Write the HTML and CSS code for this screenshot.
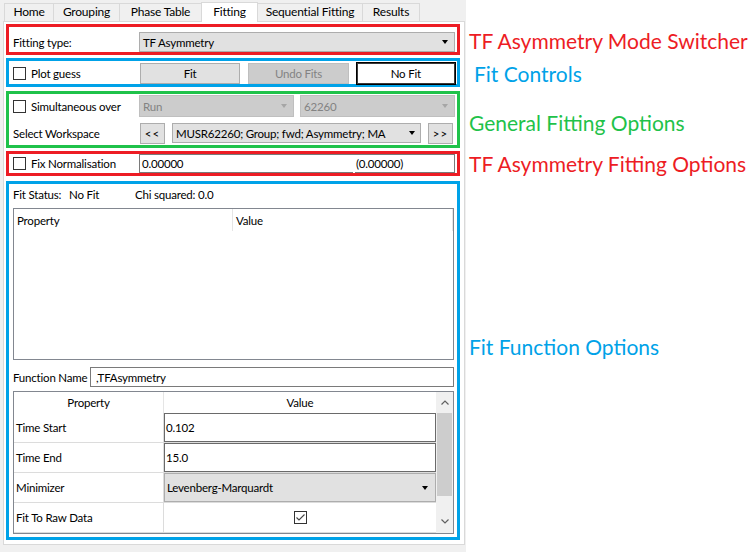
FILE: index.html
```html
<!DOCTYPE html>
<html>
<head>
<meta charset="utf-8">
<link rel="stylesheet" href="styles.css">
</head>
<body>
<div class="screen">
  <div class="app">
    <div class="tabs">
      <div class="tab w-home">Home</div>
      <div class="tab w-group">Grouping</div>
      <div class="tab w-phase">Phase Table</div>
      <div class="tab w-fit active">Fitting</div>
      <div class="tab w-seq">Sequential Fitting</div>
      <div class="tab w-res">Results</div>
    </div>
    <div class="pane">
      <section class="box red b1 row">
        <span class="lbl">Fitting type:</span>
        <div class="combo main">TF Asymmetry<i class="arrow"></i></div>
      </section>

      <section class="box blue b2 row">
        <label class="lbl chk"><span class="cb"></span>Plot guess</label>
        <div class="btns">
          <button class="btn">Fit</button>
          <button class="btn off">Undo Fits</button>
          <button class="btn dflt">No Fit</button>
        </div>
      </section>

      <section class="box green b3">
        <div class="row r1">
          <label class="lbl chk"><span class="cb"></span>Simultaneous over</label>
          <div class="pair">
            <div class="combo off">Run<i class="arrow"></i></div>
            <div class="combo off">62260<i class="arrow"></i></div>
          </div>
        </div>
        <div class="row r2">
          <span class="lbl">Select Workspace</span>
          <div class="ws">
            <button class="btn nav">&lt;&lt;</button>
            <div class="combo wsc">MUSR62260; Group; fwd; Asymmetry; MA<i class="arrow"></i></div>
            <button class="btn nav">&gt;&gt;</button>
          </div>
        </div>
      </section>

      <section class="box red b4 row">
        <label class="lbl chk"><span class="cb"></span>Fix Normalisation</label>
        <div class="norm"><span class="nv">0.00000</span><span class="ne">(0.00000)</span></div>
      </section>

      <section class="box blue b5">
        <div class="status">
          <span class="st1">Fit Status:</span>
          <span class="st2">No Fit</span>
          <span>Chi squared: 0.0</span>
        </div>
        <div class="table">
          <div class="thead">
            <span class="th1">Property</span>
            <span class="th2">Value</span>
          </div>
        </div>
        <div class="fname">
          <span class="fl">Function Name</span>
          <div class="input">,TFAsymmetry</div>
        </div>
        <div class="pb">
          <div class="pbmain">
            <div class="pbhead"><span class="ph1">Property</span><span class="ph2">Value</span></div>
            <div class="pbrow">
              <span class="pk">Time Start</span>
              <div class="pv"><div class="edit">0.102</div></div>
            </div>
            <div class="pbrow">
              <span class="pk">Time End</span>
              <div class="pv"><div class="edit">15.0</div></div>
            </div>
            <div class="pbrow">
              <span class="pk">Minimizer</span>
              <div class="pv"><div class="combo cell">Levenberg-Marquardt<i class="arrow"></i></div></div>
            </div>
            <div class="pbrow">
              <span class="pk">Fit To Raw Data</span>
              <div class="pv center">
                <span class="cb checked"><svg width="11" height="11" viewBox="0 0 11 11"><polyline points="1.5,5.5 4,8 9.5,2.5" fill="none" stroke="#444" stroke-width="1.1"/></svg></span>
              </div>
            </div>
          </div>
          <div class="sb">
            <div class="sb-up"><svg width="8" height="5" viewBox="0 0 8 5"><polyline points="0.5,4.5 4,1 7.5,4.5" fill="none" stroke="#606060" stroke-width="1.2"/></svg></div>
            <div class="sb-thumb"></div>
            <div class="sb-track"></div>
            <div class="sb-down"><svg width="8" height="5" viewBox="0 0 8 5"><polyline points="0.5,0.5 4,4 7.5,0.5" fill="none" stroke="#606060" stroke-width="1.2"/></svg></div>
          </div>
        </div>
      </section>
    </div>
  </div>

  <div class="notes">
    <p class="note t-red n1">TF Asymmetry Mode Switcher</p>
    <p class="note t-blue n2">Fit Controls</p>
    <p class="note t-green n3">General Fitting Options</p>
    <p class="note t-red n4">TF Asymmetry Fitting Options</p>
    <p class="note t-blue n5">Fit Function Options</p>
  </div>
</div>
</body>
</html>
```

FILE: styles.css
```css
* { box-sizing: border-box; }

body {
  margin: 0;
  background: #ffffff;
  font-family: Lato, "Liberation Sans", sans-serif;
  font-size: 11.5px;
  letter-spacing: -0.2px;
  color: #000;
}

.screen {
  display: flex;
  width: 752px;
  height: 552px;
  overflow: hidden;
}

.app {
  flex: none;
  width: 466px;
  height: 552px;
  background: #f0f0f0;
  padding-top: 1px;
}

/* tabs */
.tabs {
  display: flex;
  align-items: flex-end;
  height: 20px;
  padding-left: 4px;
  position: relative;
  z-index: 1;
}
.tab {
  height: 18px;
  border: 1px solid #d9d9d9;
  border-bottom: 0;
  background: #f0f0f0;
  margin-right: -1px;
  text-align: center;
  line-height: 16px;
  white-space: nowrap;
  font-size: 12px;
}
.tab.active {
  height: 20px;
  margin-bottom: -1px;
  background: #ffffff;
  line-height: 17px;
  position: relative;
  z-index: 2;
}
.w-home { width: 50px; }
.w-group { width: 67px; }
.w-phase { width: 83px; }
.w-fit { width: 57px; }
.w-seq { width: 106px; }
.w-res { width: 58px; }

.pane {
  margin-left: 3px;
  width: 462px;
  height: 524px;
  border: 1px solid #d9d9d9;
  background: #ffffff;
  padding: 2px 0 0 2px;
}

/* annotated boxes */
.box {
  width: 454px;
  border: 3px solid;
  padding: 0 2px 0 4px;
}
.red { border-color: #ed1c24; }
.blue { border-color: #00a2e8; }
.green { border-color: #1fc24a; }

.row { display: flex; align-items: center; }

.b1 { height: 31px; padding-top: 5px; }
.b2 { height: 29px; margin-top: 3px; padding-top: 2px; }
.b3 { height: 57px; margin-top: 4px; padding-top: 1px; }
.b4 { height: 25px; margin-top: 3px; }
.b5 { height: 359px; margin-top: 5px; padding: 0 3px 0 4px; }

.lbl {
  flex: none;
  width: 126px;
  display: flex;
  align-items: center;
  white-space: nowrap;
}
.cb {
  flex: none;
  width: 13px;
  height: 13px;
  border: 1px solid #333;
  background: #fff;
  margin-right: 5px;
  display: flex;
  align-items: center;
  justify-content: center;
}

/* combos */
.combo {
  height: 20px;
  display: flex;
  align-items: center;
  background: #e1e1e1;
  border: 1px solid #adadad;
  padding-left: 3px;
  white-space: nowrap;
}
.arrow {
  margin-left: auto;
  margin-right: 6px;
  width: 0;
  height: 0;
  border-left: 3.5px solid transparent;
  border-right: 3.5px solid transparent;
  border-top: 4px solid #000;
}
.combo.main { width: 316px; }
.combo.off {
  background: #cccccc;
  border-color: #bfbfbf;
  color: #838383;
  height: 22px;
  flex: 1;
}
.combo.off .arrow { border-top-color: #a6a6a6; }

/* buttons */
.btns {
  flex: 1;
  display: flex;
  align-items: center;
  gap: 8px;
  margin-left: 1px;
}
.btn {
  font: inherit;
  letter-spacing: inherit;
  color: #000;
  height: 21px;
  padding: 0;
  background: #e1e1e1;
  border: 1px solid #adadad;
}
.btns .btn { flex: 1; }
.btn.off {
  background: #cccccc;
  border-color: #bfbfbf;
  color: #838383;
}
.btn.dflt {
  height: 23px;
  background: #ffffff;
  border: 1px solid #000;
  box-shadow: inset 0 0 0 1px #3a3a3a;
  margin: 0 -1px;
}

.r1 { height: 22px; }
.r2 { height: 22px; margin-top: 5px; }
.pair {
  flex: 1;
  display: flex;
  gap: 6px;
}
.ws {
  flex: 1;
  display: flex;
  align-items: center;
  gap: 7px;
  margin-left: 1px;
  margin-right: 2px;
}
.btn.nav { width: 25px; flex: none; letter-spacing: 1px; }
.combo.wsc { flex: 1; }
.combo.wsc .arrow { margin-right: 5px; }

/* normalisation */
.norm {
  width: 316px;
  height: 19px;
  display: flex;
  gap: 2px;
  border: 1px solid #7a7a7a;
  border-bottom: 0;
}
.nv, .ne {
  display: flex;
  align-items: center;
  border-bottom: 1px solid #7a7a7a;
}
.nv { width: 213px; padding-left: 2px; }
.ne { flex: 1; padding-left: 1px; }

/* fit function area */
.status {
  height: 20px;
  display: flex;
  align-items: center;
  margin-bottom: 4px;
  white-space: nowrap;
}
.st1 { width: 56px; }
.st2 { width: 66px; }

.table {
  height: 152px;
  border: 1px solid #828790;
  background: #fff;
}
.thead {
  display: flex;
  height: 22px;
}
.th1, .th2 {
  display: flex;
  align-items: center;
  padding-left: 3px;
  border-right: 1px solid #e5e5e5;
}
.th1 { width: 219px; }
.th2 { flex: 1; }

.fname {
  margin-top: 7px;
  height: 20px;
  display: flex;
  align-items: center;
}
.fl { width: 77px; flex: none; white-space: nowrap; }
.input {
  flex: 1;
  height: 20px;
  border: 1px solid #7a7a7a;
  display: flex;
  align-items: center;
  padding-left: 5px;
}

.pb {
  margin-top: 4px;
  height: 143px;
  border: 1px solid #828790;
  display: flex;
}
.pbmain { flex: 1; }
.pbhead {
  height: 21px;
  display: flex;
}
.pbhead span {
  display: flex;
  align-items: center;
  justify-content: center;
}
.ph1 { width: 150px; border-right: 1px solid #e5e5e5; }
.ph2 { flex: 1; }
.pbrow {
  height: 30px;
  display: flex;
  border-bottom: 1px solid #dcdcdc;
}
.pk {
  width: 150px;
  flex: none;
  border-right: 1px solid #dcdcdc;
  padding-left: 2px;
  display: flex;
  align-items: center;
  white-space: nowrap;
}
.pv { flex: 1; display: flex; }
.pv.center { align-items: center; justify-content: center; }
.pv.center .cb { margin: 0; }
.edit {
  flex: 1;
  border: 1px solid #6a6a6a;
  background: #fff;
  display: flex;
  align-items: center;
  padding-left: 1px;
}
.combo.cell {
  flex: 1;
  height: auto;
  padding-left: 2px;
}
.combo.cell .arrow { margin-right: 7px; }

/* scrollbar */
.sb {
  width: 17px;
  flex: none;
  background: #f0f0f0;
  display: flex;
  flex-direction: column;
}
.sb-up, .sb-down {
  height: 17px;
  display: flex;
  align-items: center;
  justify-content: center;
}
.sb-up { height: 21px; }
.sb-thumb {
  height: 83px;
  margin: 0 1px;
  background: #cdcdcd;
}
.sb-track { flex: 1; }
.sb-down { height: 20px; align-items: flex-start; padding-top: 6px; }

/* annotations */
.notes {
  flex: 1;
  display: flex;
  flex-direction: column;
  padding-left: 3px;
}
.note {
  margin: 0;
  font-family: Lato, "Liberation Sans", sans-serif;
  font-size: 21px;
  line-height: 24px;
  letter-spacing: 0;
  white-space: nowrap;
}
.t-red { color: #ed1c24; }
.t-blue { color: #00a2e8; }
.t-green { color: #1fc24a; }
.n1 { margin-top: 29px; }
.n2 { margin-top: 9px; padding-left: 5px; }
.n3 { margin-top: 25px; }
.n4 { margin-top: 17px; }
.n5 { margin-top: 159px; }
```
